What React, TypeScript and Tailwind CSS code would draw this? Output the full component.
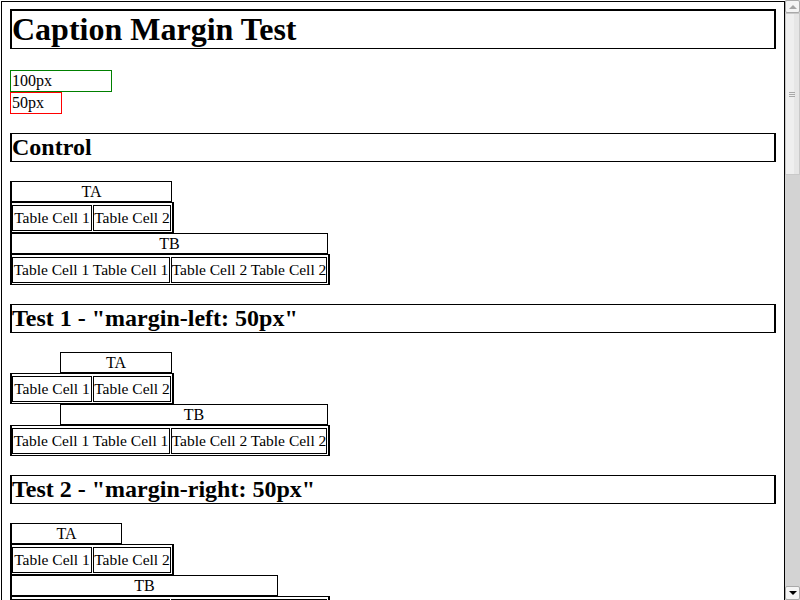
import React from "react";

function Caption({ text, className }: { text: string; className: string }) {
  return (
    <div
      className={`h-[21px] border-t border-b border-r border-black text-center text-[16px] leading-[19px] ${className}`}
    >
      {text}
    </div>
  );
}

function Cell({ text, className }: { text: string; className: string }) {
  return (
    <div
      className={`h-full border border-black flex items-center justify-center whitespace-nowrap text-[15.5px] leading-[20px] ${className}`}
    >
      {text}
    </div>
  );
}

function SmallTable() {
  return (
    <div className="flex w-[164px] h-[31px] border-y border-l-2 border-r-2 border-black pt-[2px] pb-[1px] pr-[1px] gap-[1px]">
      <Cell text="Table Cell 1" className="w-[80px]" />
      <Cell text="Table Cell 2" className="w-[78px]" />
    </div>
  );
}

function BigTable() {
  return (
    <div className="flex w-[320px] h-[31px] border-y border-l-2 border-r-2 border-black pt-[2px] pb-[1px] pr-[1px] gap-[1px]">
      <Cell text="Table Cell 1 Table Cell 1" className="w-[158px]" />
      <Cell text="Table Cell 2 Table Cell 2" className="w-[156px]" />
    </div>
  );
}

function H2({ text, className }: { text: string; className: string }) {
  return (
    <h2
      className={`h-[29px] border-y border-x-2 border-black text-[24px] font-bold leading-[27px] ${className}`}
    >
      {text}
    </h2>
  );
}

function Scrollbar() {
  return (
    <div className="w-[15px] h-[600px] flex flex-col bg-[#d3d3d3]">
      <div className="h-[13px] bg-[#f4f4f4] border border-[#a9a9a9] rounded-[2px] flex items-center justify-center">
        <div className="w-0 h-0 border-l-[4px] border-r-[4px] border-b-[4px] border-l-transparent border-r-transparent border-b-[#a4a4a4]" />
      </div>
      <div className="h-[162px] border border-[#c9c9c9] flex">
        <div className="w-[8px] bg-[#efefef]" />
        <div className="flex-1 bg-[#e6e6e6]" />
      </div>
      <div className="flex-1" />
      <div className="h-[14px] bg-[#f4f4f4] border border-[#a9a9a9] rounded-[2px] flex items-center justify-center">
        <div className="w-0 h-0 border-l-[4px] border-r-[4px] border-t-[4px] border-l-transparent border-r-transparent border-t-black" />
      </div>
    </div>
  );
}

export default function App() {
  return (
    <div className="relative flex w-[800px] h-[600px] overflow-hidden bg-white text-black font-['Liberation_Serif','Times_New_Roman',serif]">
      <div className="w-[785px] h-[600px] overflow-hidden pt-[1px] pl-[1px]">
        <div className="w-[784px] h-[700px] border-l border-t border-r border-black pt-[7px] pl-[8px] pr-[8px] flex flex-col">
          <h1 className="h-[40px] border-t-2 border-x-2 border-b border-black text-[32px] font-bold leading-[37px]">
            Caption Margin Test
          </h1>
          <div className="mt-[21px] w-[102px] h-[22px] border border-[#008000] text-[16px] leading-[20px] pl-[1px]">
            100px
          </div>
          <div className="w-[52px] h-[22px] border border-[#ff0000] text-[16px] leading-[20px] pl-[1px]">
            50px
          </div>

          <H2 text="Control" className="mt-[19px]" />
          <Caption text="TA" className="mt-[19px] w-[162px] border-l-2" />
          <SmallTable />
          <Caption text="TB" className="w-[318px] border-l-2" />
          <BigTable />

          <H2 text={'Test 1 - "margin-left: 50px"'} className="mt-[19px]" />
          <Caption text="TA" className="mt-[19px] ml-[50px] w-[112px] border-l" />
          <SmallTable />
          <Caption text="TB" className="ml-[50px] w-[268px] border-l" />
          <BigTable />

          <H2 text={'Test 2 - "margin-right: 50px"'} className="mt-[19px]" />
          <Caption text="TA" className="mt-[19px] w-[112px] border-l-2" />
          <SmallTable />
          <Caption text="TB" className="w-[268px] border-l-2" />
          <BigTable />
        </div>
      </div>
      <div className="relative">
        <Scrollbar />
        <div className="absolute left-[4px] top-[92px] flex flex-col gap-[1px]">
          <div className="w-[6px] h-[1px] bg-[#a8a8a8]" />
          <div className="w-[6px] h-[1px] bg-[#a8a8a8]" />
          <div className="w-[6px] h-[1px] bg-[#a8a8a8]" />
        </div>
      </div>
    </div>
  );
}
